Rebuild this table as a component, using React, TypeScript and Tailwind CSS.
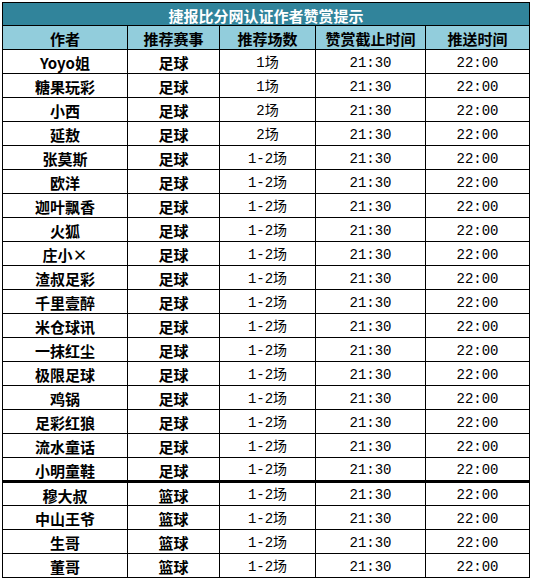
const rows: [string, string, string][] = [
  ["Yoyo姐", "足球", "1场"],
  ["糖果玩彩", "足球", "1场"],
  ["小西", "足球", "2场"],
  ["延敖", "足球", "2场"],
  ["张莫斯", "足球", "1-2场"],
  ["欧洋", "足球", "1-2场"],
  ["迦叶飘香", "足球", "1-2场"],
  ["火狐", "足球", "1-2场"],
  ["庄小×", "足球", "1-2场"],
  ["渣叔足彩", "足球", "1-2场"],
  ["千里壹醉", "足球", "1-2场"],
  ["米仓球讯", "足球", "1-2场"],
  ["一抹红尘", "足球", "1-2场"],
  ["极限足球", "足球", "1-2场"],
  ["鸡锅", "足球", "1-2场"],
  ["足彩红狼", "足球", "1-2场"],
  ["流水童话", "足球", "1-2场"],
  ["小明童鞋", "足球", "1-2场"],
  ["穆大叔", "篮球", "1-2场"],
  ["中山王爷", "篮球", "1-2场"],
  ["生哥", "篮球", "1-2场"],
  ["董哥", "篮球", "1-2场"],
];

const cjk = "font-['Noto_Sans_CJK_SC',sans-serif]";
const mono = "font-['Liberation_Mono','Noto_Sans_CJK_SC',monospace]";

export default function App() {
  return (
    <div className="min-h-[581px] bg-white pl-[2px] pt-[2px]">
      <table className="w-[527px] table-fixed border-collapse text-black">
        <colgroup>
          <col className="w-[125px]" />
          <col className="w-[92px]" />
          <col className="w-[96px]" />
          <col className="w-[110px]" />
          <col className="w-[104px]" />
        </colgroup>
        <thead>
          <tr className="h-[23px]">
            <th
              colSpan={5}
              className={`border border-black bg-[#31849b] p-0 pt-[2px] text-center text-[15px] leading-none font-bold text-white ${cjk}`}
            >
              捷报比分网认证作者赞赏提示
            </th>
          </tr>
          <tr className="h-[24px]">
            {["作者", "推荐赛事", "推荐场数", "赞赏截止时间", "推送时间"].map((h) => (
              <th
                key={h}
                className={`border border-black bg-[#92cddc] p-0 pt-[2px] text-center text-[15px] leading-none font-bold ${cjk}`}
              >
                {h}
              </th>
            ))}
          </tr>
        </thead>
        <tbody>
          {rows.map(([name, sport, count], i) => {
            const edge = i === 17 ? "border-b-[3px]" : "";
            return (
              <tr key={name} className="h-[24px]">
                <td className={`border border-black p-0 pt-[2px] text-center text-[15px] leading-none font-bold ${cjk} ${edge}`}>
                  {name}
                </td>
                <td className={`border border-black p-0 pt-[2px] text-center text-[15px] leading-none font-bold ${cjk} ${edge}`}>
                  {sport}
                </td>
                <td className={`border border-black p-0 pt-[2px] text-center text-[14px] leading-none ${mono} ${edge}`}>
                  {count}
                </td>
                <td className={`border border-black p-0 pt-[2px] text-center text-[14px] leading-none ${mono} ${edge}`}>
                  21:30
                </td>
                <td className={`border border-black p-0 pt-[2px] text-center text-[14px] leading-none ${mono} ${edge}`}>
                  22:00
                </td>
              </tr>
            );
          })}
        </tbody>
      </table>
    </div>
  );
}
